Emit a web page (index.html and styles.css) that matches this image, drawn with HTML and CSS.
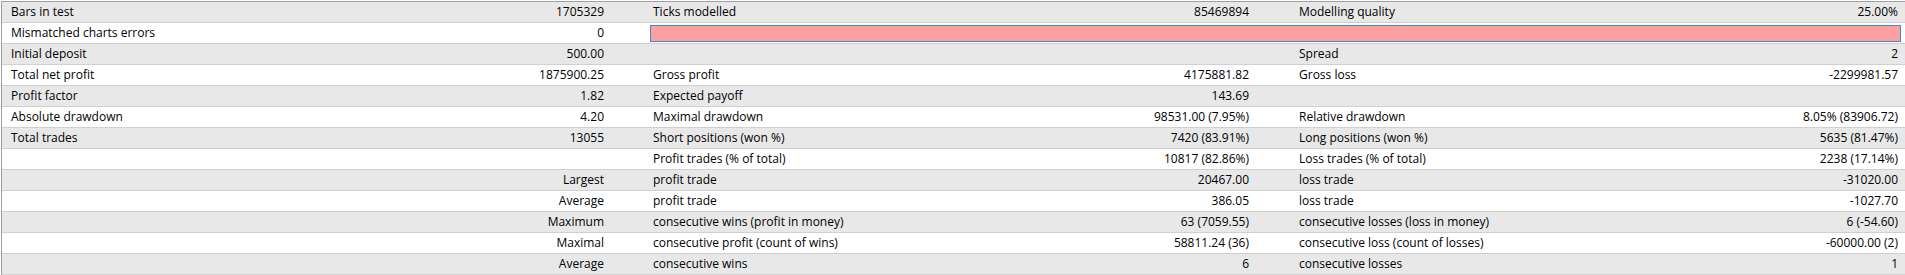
FILE: index.html
```html
<!DOCTYPE html>
<html lang="en">
<head>
<meta charset="utf-8">
<title>Strategy Tester Report</title>
<link rel="stylesheet" href="styles.css">
</head>
<body>
<div class="report">
  <div class="row odd">
    <div class="c1">Bars in test</div><div class="c2">1705329</div>
    <div class="c3">Ticks modelled</div><div class="c4">85469894</div>
    <div class="c5">Modelling quality</div><div class="c6">25.00%</div>
  </div>
  <div class="row">
    <div class="c1">Mismatched charts errors</div><div class="c2">0</div>
    <div class="quality"><div class="quality-bar"></div></div>
  </div>
  <div class="row odd">
    <div class="c1">Initial deposit</div><div class="c2">500.00</div>
    <div class="c3"></div><div class="c4"></div>
    <div class="c5">Spread</div><div class="c6">2</div>
  </div>
  <div class="row">
    <div class="c1">Total net profit</div><div class="c2">1875900.25</div>
    <div class="c3">Gross profit</div><div class="c4">4175881.82</div>
    <div class="c5">Gross loss</div><div class="c6">-2299981.57</div>
  </div>
  <div class="row odd">
    <div class="c1">Profit factor</div><div class="c2">1.82</div>
    <div class="c3">Expected payoff</div><div class="c4">143.69</div>
    <div class="c5"></div><div class="c6"></div>
  </div>
  <div class="row">
    <div class="c1">Absolute drawdown</div><div class="c2">4.20</div>
    <div class="c3">Maximal drawdown</div><div class="c4">98531.00 (7.95%)</div>
    <div class="c5">Relative drawdown</div><div class="c6">8.05% (83906.72)</div>
  </div>
  <div class="row odd">
    <div class="c1">Total trades</div><div class="c2">13055</div>
    <div class="c3">Short positions (won %)</div><div class="c4">7420 (83.91%)</div>
    <div class="c5">Long positions (won %)</div><div class="c6">5635 (81.47%)</div>
  </div>
  <div class="row">
    <div class="c1"></div><div class="c2"></div>
    <div class="c3">Profit trades (% of total)</div><div class="c4">10817 (82.86%)</div>
    <div class="c5">Loss trades (% of total)</div><div class="c6">2238 (17.14%)</div>
  </div>
  <div class="row odd">
    <div class="c1"></div><div class="c2">Largest</div>
    <div class="c3">profit trade</div><div class="c4">20467.00</div>
    <div class="c5">loss trade</div><div class="c6">-31020.00</div>
  </div>
  <div class="row">
    <div class="c1"></div><div class="c2">Average</div>
    <div class="c3">profit trade</div><div class="c4">386.05</div>
    <div class="c5">loss trade</div><div class="c6">-1027.70</div>
  </div>
  <div class="row odd">
    <div class="c1"></div><div class="c2">Maximum</div>
    <div class="c3">consecutive wins (profit in money)</div><div class="c4">63 (7059.55)</div>
    <div class="c5">consecutive losses (loss in money)</div><div class="c6">6 (-54.60)</div>
  </div>
  <div class="row">
    <div class="c1"></div><div class="c2">Maximal</div>
    <div class="c3">consecutive profit (count of wins)</div><div class="c4">58811.24 (36)</div>
    <div class="c5">consecutive loss (count of losses)</div><div class="c6">-60000.00 (2)</div>
  </div>
  <div class="row odd">
    <div class="c1"></div><div class="c2">Average</div>
    <div class="c3">consecutive wins</div><div class="c4">6</div>
    <div class="c5">consecutive losses</div><div class="c6">1</div>
  </div>
</div>
</body>
</html>
```
FILE: styles.css
```css
html, body {
  margin: 0;
  padding: 0;
  background: #ffffff;
}

body {
  font-family: "Open Sans", "Liberation Sans", sans-serif;
  font-size: 12px;
  color: #000000;
  overflow: hidden;
}

.report {
  margin: 1px 0 0 1px;
  border-top: 1px solid #a0a0a0;
  border-left: 1px solid #a0a0a0;
}

.row {
  display: grid;
  grid-template-columns: 300px 348px 300px 346px 300px 1fr;
  height: 20px;
  line-height: 20px;
  border-bottom: 1px solid #d0d0d0;
  background: #ffffff;
}

.row.odd {
  background: #e8e8e8;
}

.row > div {
  white-space: nowrap;
  overflow: hidden;
}

.c1 {
  padding-left: 9px;
}

.c2 {
  text-align: right;
  padding-right: 46px;
}

.c3 {
  padding-left: 3px;
}

.c4 {
  text-align: right;
  padding-right: 47px;
}

.c5 {
  padding-left: 3px;
}

.c6 {
  text-align: right;
  padding-right: 7px;
}

.quality {
  grid-column: 3 / 7;
  padding: 2px 4px 1px 0;
}

.quality-bar {
  height: 15px;
  background: #ffa0a0;
  border: 1px solid #3c8ad8;
}
```
